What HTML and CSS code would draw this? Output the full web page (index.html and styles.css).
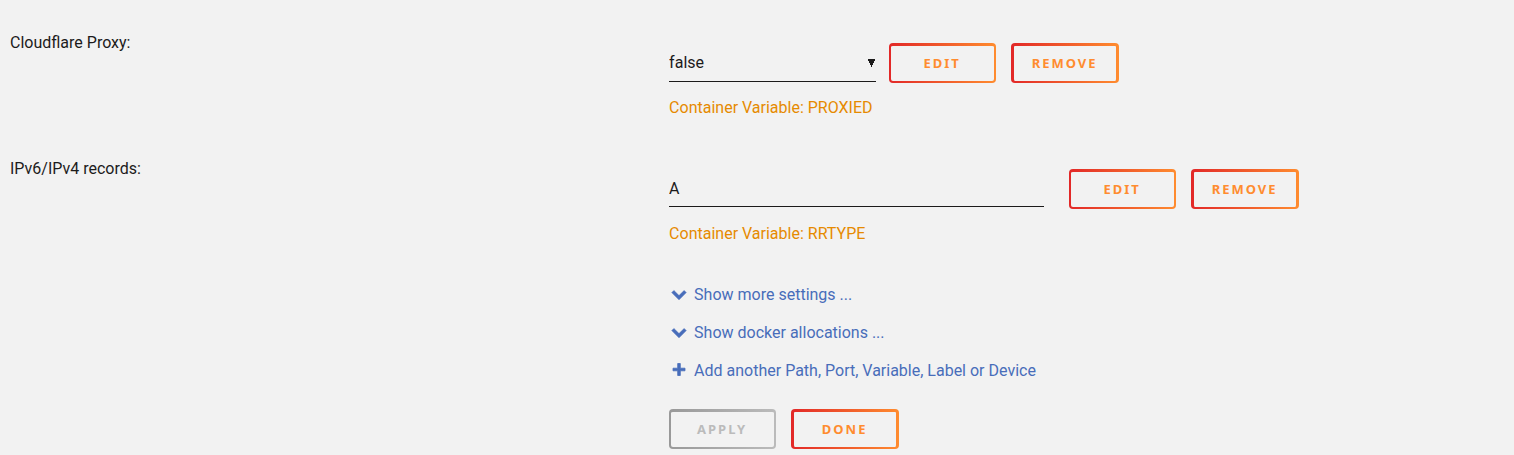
FILE: index.html
```html
<!DOCTYPE html>
<html lang="en">
<head>
<meta charset="utf-8">
<title>Container settings</title>
<link rel="stylesheet" href="styles.css">
</head>
<body>
<form class="settings">
  <div class="row">
    <label class="name" for="proxied">Cloudflare Proxy:</label>
    <div class="field">
      <div class="controls">
        <select class="control select" id="proxied"><option>false</option><option>true</option></select>
        <div class="buttons">
          <button class="btn" type="button">Edit</button>
          <button class="btn strong" type="button">Remove</button>
        </div>
      </div>
      <p class="help">Container Variable: PROXIED</p>
    </div>
  </div>
  <div class="row">
    <label class="name" for="rrtype">IPv6/IPv4 records:</label>
    <div class="field">
      <div class="controls wide">
        <input class="control text" id="rrtype" type="text" value="A">
        <div class="buttons">
          <button class="btn" type="button">Edit</button>
          <button class="btn strong" type="button">Remove</button>
        </div>
      </div>
      <p class="help">Container Variable: RRTYPE</p>
    </div>
  </div>
  <div class="row">
    <div class="field footer">
      <a class="link" href="#"><svg class="icon" viewBox="0 0 20 16" aria-hidden="true"><path d="M2.800 5.600L4.900 3.500 10 8.600l5.100-5.100 2.100 2.100L10 12.800z" fill="currentColor" stroke="currentColor" stroke-width=".6" stroke-linejoin="round"/></svg>Show more settings ...</a>
      <a class="link" href="#"><svg class="icon" viewBox="0 0 20 16" aria-hidden="true"><path d="M2.800 5.600L4.900 3.500 10 8.600l5.100-5.100 2.100 2.100L10 12.800z" fill="currentColor" stroke="currentColor" stroke-width=".6" stroke-linejoin="round"/></svg>Show docker allocations ...</a>
      <a class="link" href="#"><svg class="icon" viewBox="0 0 20 16" aria-hidden="true"><path d="M8.700.5h2.600v4.700H16v2.600h-4.700v4.700H8.700V7.800H4V5.200h4.700z" fill="currentColor" stroke="currentColor" stroke-width=".8" stroke-linejoin="round"/></svg>Add another Path, Port, Variable, Label or Device</a>
      <div class="buttons actions">
        <button class="btn" type="submit" disabled>Apply</button>
        <button class="btn strong" type="button">Done</button>
      </div>
    </div>
  </div>
</form>
</body>
</html>
```
FILE: styles.css
```css
* { box-sizing: border-box; }
body {
  margin: 0;
  background: #f2f2f2;
  color: #1c1b1b;
  font: 16px/22px Roboto, sans-serif;
}
.settings { padding: 32px 6px 0 10px; }
.row { display: grid; grid-template-columns: 44% 56%; }
.name { justify-self: start; align-self: start; }
.field { grid-column: 2; padding-top: 11px; }
.row + .row { margin-top: 39px; }
.controls { display: flex; gap: 13px; align-items: flex-start; }
.controls.wide { gap: 25px; }
.control {
  height: 39px;
  padding: 2px 0 0;
  border: 0;
  border-bottom: 1px solid #1c1b1b;
  border-radius: 0;
  background: transparent;
  color: inherit;
  font: inherit;
  outline: 0;
}
.select {
  width: 207px;
  appearance: none;
  background: conic-gradient(from -26deg at 50% 100%, #1c1b1b 52deg, transparent 0) right 0 top 16px / 9px 8px no-repeat;
}
.text { width: 375px; height: 38px; }
.buttons { display: flex; gap: 15px; }
.btn {
  width: 107px;
  height: 40px;
  padding: 0 1px 2px 0;
  border: solid transparent;
  border-width: 3px 2px 2px;
  border-radius: 4px;
  background: linear-gradient(#f2f2f2, #f2f2f2) padding-box, linear-gradient(90deg, #e22828, #ff8c2f) border-box;
  color: #ff8c2f;
  font: bold 13px/16px "Noto Sans", sans-serif;
  letter-spacing: 2px;
  text-transform: uppercase;
}
.btn.strong { width: 108px; border-width: 3px 3px 2px; }
.btn:disabled {
  background: linear-gradient(#f2f2f2, #f2f2f2) padding-box, linear-gradient(90deg, #999, #bbb) border-box;
  color: #bbb;
}
.help { margin: 14px 0 0; color: #e68a00; }
.footer { display: flex; flex-direction: column; align-items: flex-start; gap: 16px; padding-top: 0; }
.link { display: flex; align-items: center; gap: 5px; color: #486dba; text-decoration: none; }
.icon { width: 20px; height: 16px; }
.actions { margin-top: 11px; }
```
